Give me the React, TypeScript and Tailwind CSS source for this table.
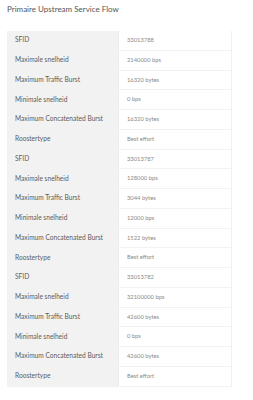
const flows = [
  { sfid: "33013788", max: "2140000 bps", burst: "16320 bytes", min: "0 bps", concat: "16320 bytes", type: "Best effort" },
  { sfid: "33013787", max: "128000 bps", burst: "3044 bytes", min: "12000 bps", concat: "1522 bytes", type: "Best effort" },
  { sfid: "33013782", max: "32100000 bps", burst: "42600 bytes", min: "0 bps", concat: "42600 bytes", type: "Best effort" },
]

const App = () => {
  const rows: [string, string][] = []
  flows.forEach((f) => {
    rows.push(["SFID", f.sfid])
    rows.push(["Maximale snelheid", f.max])
    rows.push(["Maximum Traffic Burst", f.burst])
    rows.push(["Minimale snelheid", f.min])
    rows.push(["Maximum Concatenated Burst", f.concat])
    rows.push(["Roostertype", f.type])
  })

  return (
    <div className="w-[253px] h-[400px] bg-white overflow-hidden" style={{ fontFamily: "Lato, 'Open Sans', sans-serif" }}>
      <h1 className="pl-[7px] pt-[4px] h-[31px] text-[8px] leading-[10px] font-normal text-[#555]">Primaire Upstream Service Flow</h1>
      <div className="ml-[7px] w-[225px] border-r border-[#f0f0f0]">
        {rows.map(([label, value], idx) => (
          <div key={idx} className="flex h-[19.76px] border-b border-[#f2f2f2]">
            <div className="w-[112px] bg-[#f2f2f2] border-r border-[#ececec] pl-[8px] flex items-center text-[6.6px] text-[#5c5c5c]">
              {label}
            </div>
            <div className="flex-1 pl-[8px] flex items-center text-[5.8px] text-[#8a8a8a]">{value}</div>
          </div>
        ))}
      </div>
    </div>
  )
}

export default App
